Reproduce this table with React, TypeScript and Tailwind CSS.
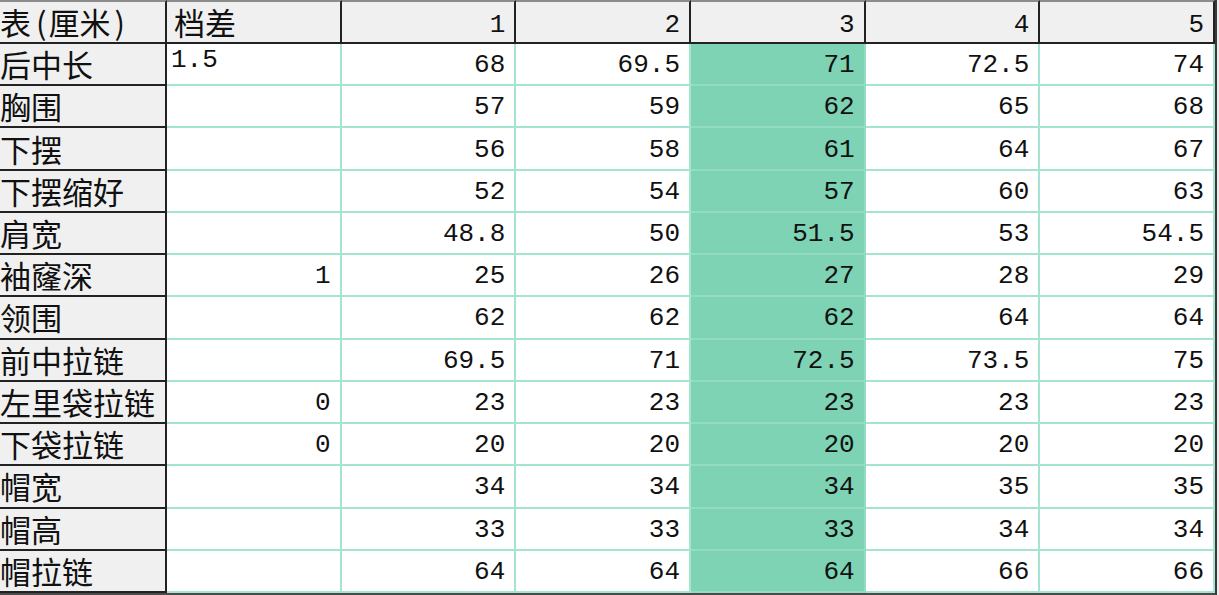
import React from "react";

const headers = ["1", "2", "3", "4", "5"];

const rows: string[][] = [
  ["后中长", "1.5", "68", "69.5", "71", "72.5", "74"],
  ["胸围", "", "57", "59", "62", "65", "68"],
  ["下摆", "", "56", "58", "61", "64", "67"],
  ["下摆缩好", "", "52", "54", "57", "60", "63"],
  ["肩宽", "", "48.8", "50", "51.5", "53", "54.5"],
  ["袖窿深", "1", "25", "26", "27", "28", "29"],
  ["领围", "", "62", "62", "62", "64", "64"],
  ["前中拉链", "", "69.5", "71", "72.5", "73.5", "75"],
  ["左里袋拉链", "0", "23", "23", "23", "23", "23"],
  ["下袋拉链", "0", "20", "20", "20", "20", "20"],
  ["帽宽", "", "34", "34", "34", "35", "35"],
  ["帽高", "", "33", "33", "33", "34", "34"],
  ["帽拉链", "", "64", "64", "64", "66", "66"],
];

const cjk = "font-['Noto_Sans_CJK_SC',sans-serif]";
const mono = "font-['Liberation_Mono','Noto_Sans_CJK_SC',monospace]";

export default function App() {
  return (
    <div className="w-[1219px] h-[595px] bg-[#ececec] flex overflow-hidden text-[#111]">
      <div className="w-[1217px] h-[595px] border-r-2 border-[#3a3a3a] flex flex-col">
        <div className="grid grid-cols-[167px_repeat(6,1fr)] grid-rows-[44px_repeat(13,1fr)] flex-1 border-b-2 border-[#4a4a4a]">
          {/* header row */}
          <div className={`bg-[#f0f0f0] border-t-2 border-t-[#8c8c8c] border-r-2 border-b-2 border-r-[#222] border-b-[#222] flex items-end pb-[1px] text-[31px] leading-[38px] whitespace-nowrap ${cjk}`}>
            <span>表</span>
            <span className="ml-[5px] mr-[2px]">(</span>
            <span>厘米</span>
            <span className="ml-[4px]">)</span>
          </div>
          <div className={`bg-[#f0f0f0] border-t-2 border-t-[#8c8c8c] border-r-2 border-b-2 border-r-[#222] border-b-[#222] flex items-end pb-[1px] pl-[7px] text-[31px] leading-[38px] ${cjk}`}>
            档差
          </div>
          {headers.map((h) => (
            <div
              key={h}
              className={`bg-[#f0f0f0] border-t-2 border-t-[#8c8c8c] border-r-2 border-b-2 border-r-[#222] border-b-[#222] flex items-end justify-end pr-[9px] pb-[4px] text-[26px] leading-[26px] ${mono}`}
            >
              {h}
            </div>
          ))}

          {rows.map((r, ri) => (
            <React.Fragment key={ri}>
              <div className={`bg-[#f0f0f0] border-r-2 border-b-2 border-[#222] flex items-center text-[31px] leading-[36px] whitespace-nowrap ${cjk}`}>
                {r[0]}
              </div>
              {ri === 0 ? (
                <div className={`bg-white border-r-2 border-b-2 border-[#a6e4d2] flex items-start pl-[4px] pt-[3px] text-[26px] leading-[26px] ${mono}`}>
                  {r[1]}
                </div>
              ) : (
                <div className={`bg-white border-r-2 border-b-2 border-[#a6e4d2] flex items-center justify-end pr-[9px] pt-[2px] text-[26px] leading-[26px] ${mono}`}>
                  {r[1]}
                </div>
              )}
              {r.slice(2).map((v, ci) => (
                <div
                  key={ci}
                  className={`${ci === 2 ? "bg-[#7dd3b4] border-[#93dcc3]" : "bg-white border-[#a6e4d2]"} border-r-2 border-b-2 flex items-center justify-end pr-[9px] pt-[2px] text-[26px] leading-[26px] ${mono}`}
                >
                  {v}
                </div>
              ))}
            </React.Fragment>
          ))}
        </div>
      </div>
    </div>
  );
}
